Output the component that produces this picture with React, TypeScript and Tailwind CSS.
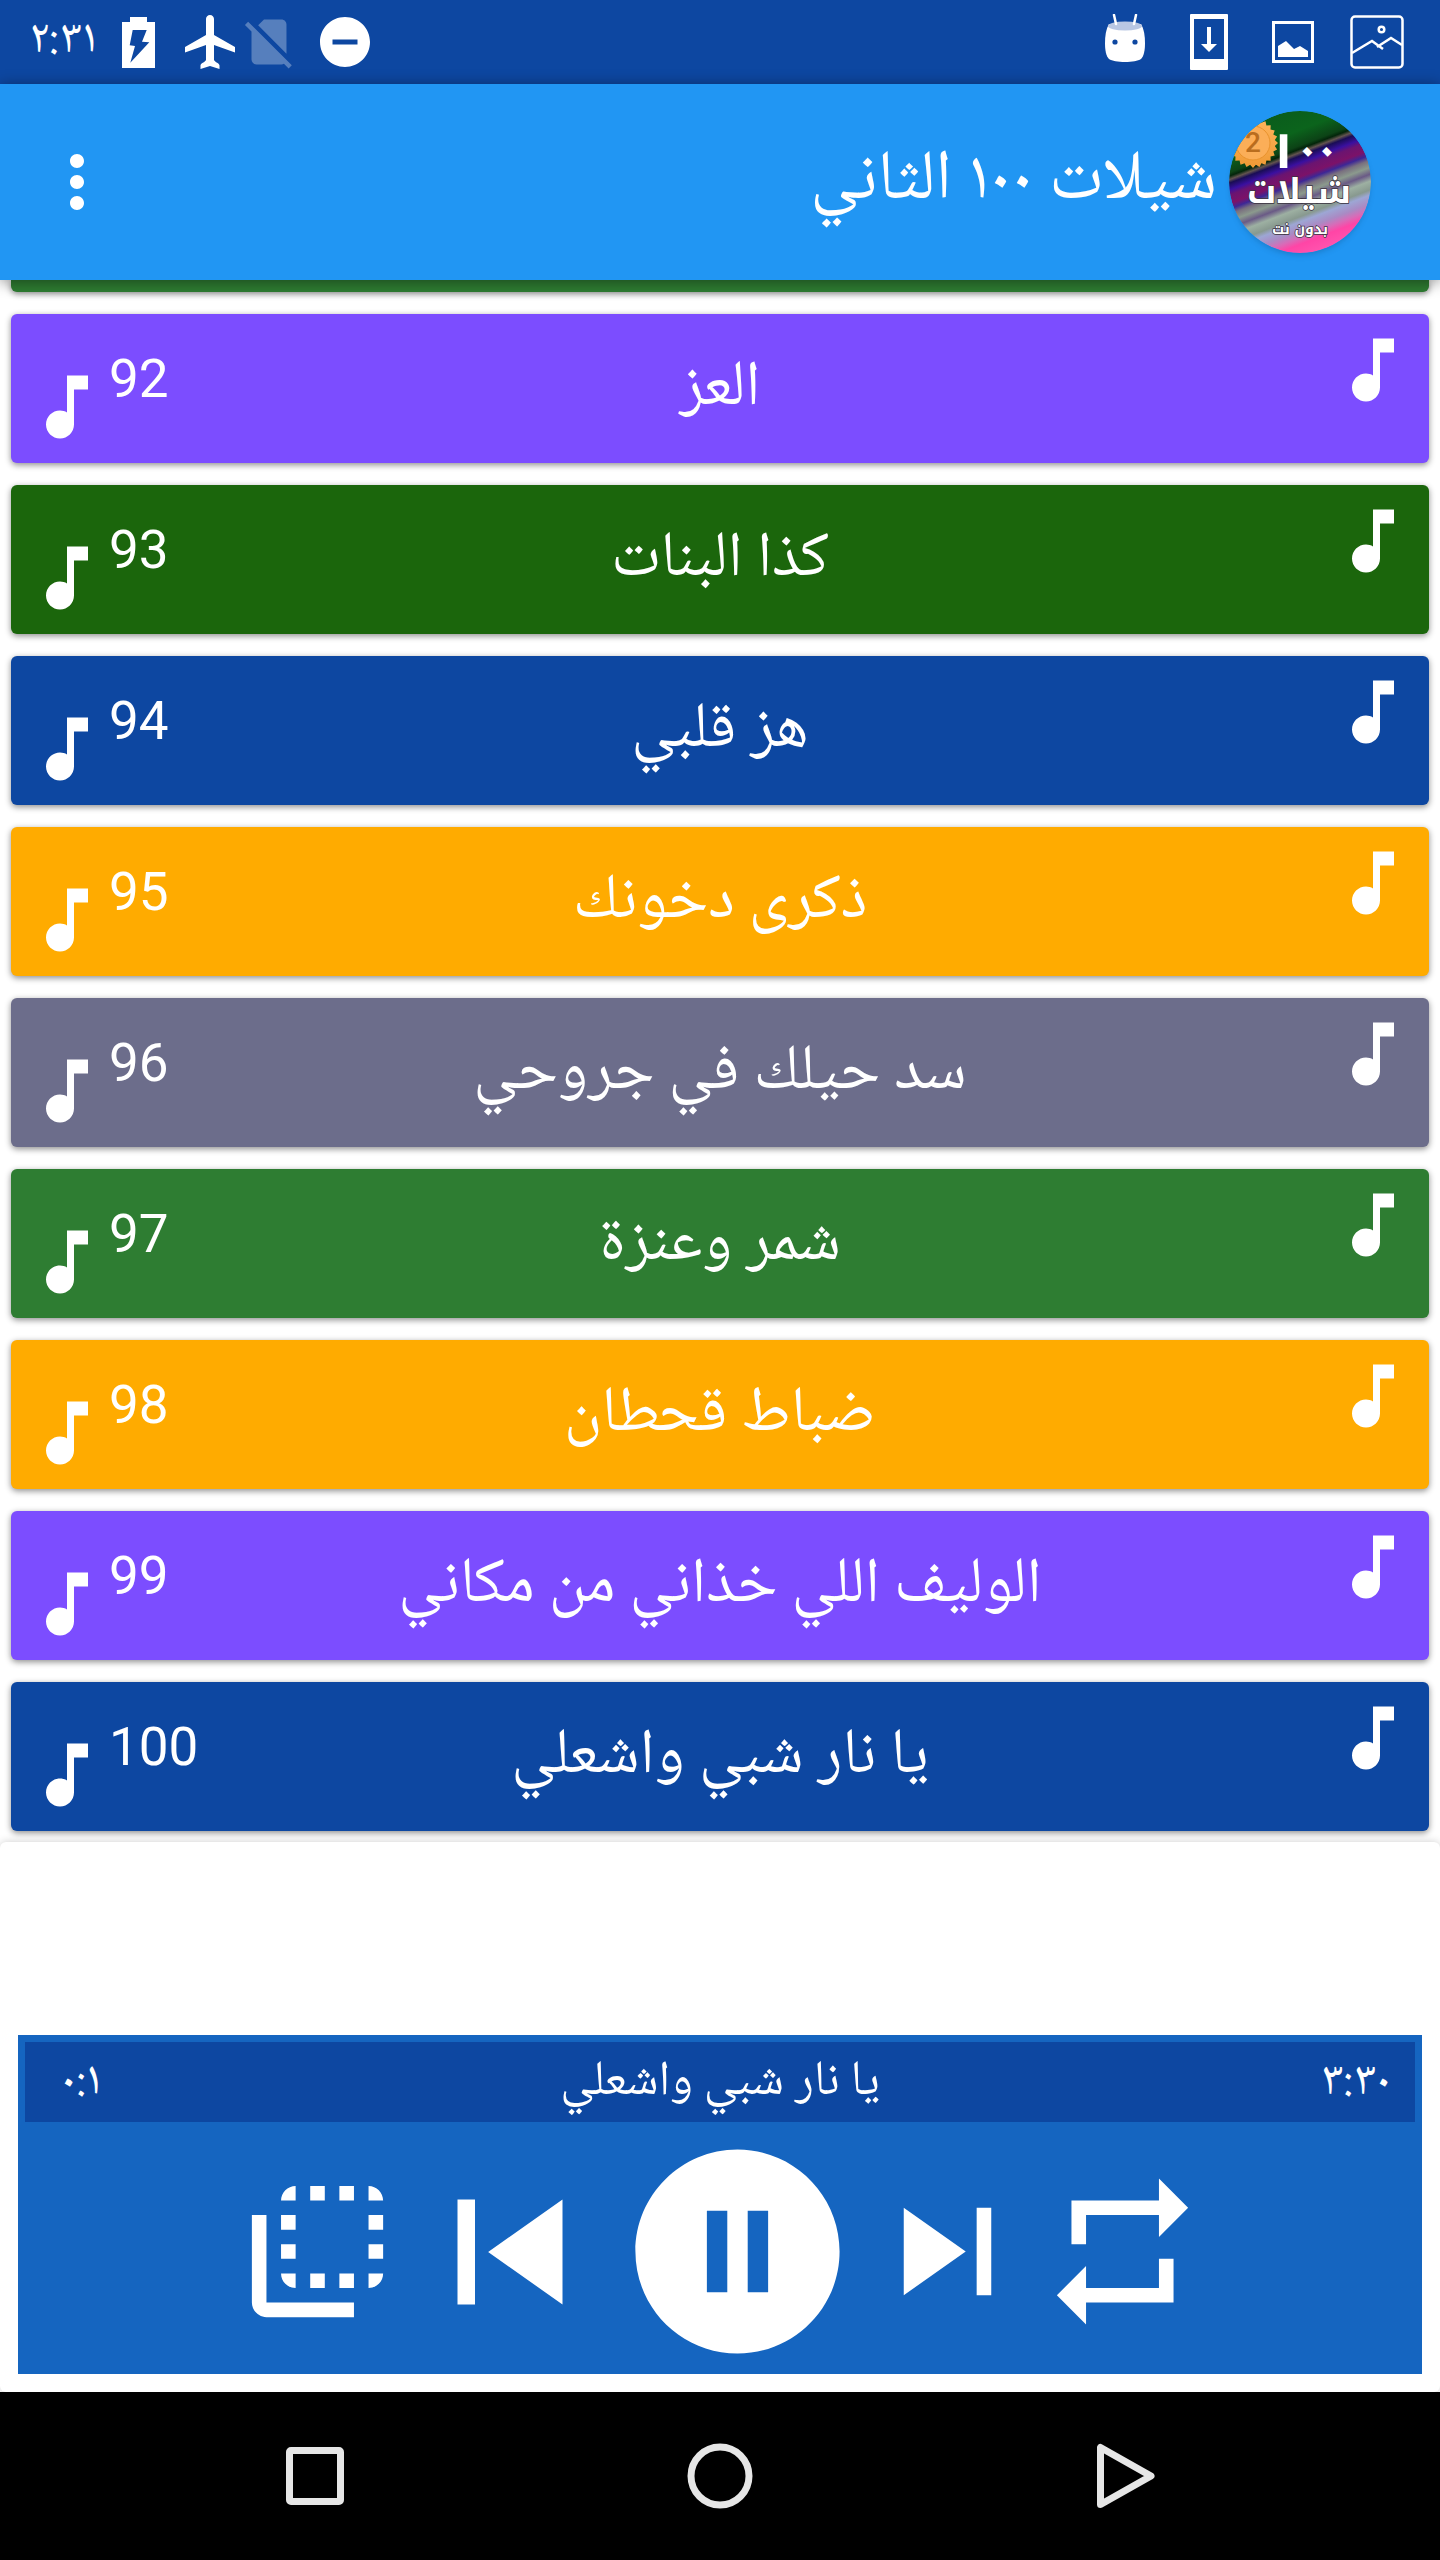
import React from "react";

type Track = { number: number; title: string; color: string };

const tracks: Track[] = [
  { number: 92, title: "العز", color: "bg-[#7c4dff]" },
  { number: 93, title: "كذا البنات", color: "bg-[#1b660c]" },
  { number: 94, title: "هز قلبي", color: "bg-[#0d47a1]" },
  { number: 95, title: "ذكرى دخونك", color: "bg-[#ffab00]" },
  { number: 96, title: "سد حيلك في جروحي", color: "bg-[#6c6d8b]" },
  { number: 97, title: "شمر وعنزة", color: "bg-[#2e7d32]" },
  { number: 98, title: "ضباط قحطان", color: "bg-[#ffab00]" },
  { number: 99, title: "الوليف اللي خذاني من مكاني", color: "bg-[#7c4dff]" },
  { number: 100, title: "يا نار شبي واشعلي", color: "bg-[#0d47a1]" },
];

function Icon({ path, className }: { path: string; className: string }) {
  return (
    <svg viewBox="0 0 24 24" fill="currentColor" aria-hidden="true" className={className}>
      <path d={path} />
    </svg>
  );
}

const NOTE = "M12 3v10.55c-.59-.34-1.27-.55-2-.55-2.21 0-4 1.79-4 4s1.79 4 4 4 4-1.79 4-4V7h4V3h-6z";
const MORE =
  "M12 8c1.1 0 2-.9 2-2s-.9-2-2-2-2 .9-2 2 .9 2 2 2zm0 2c-1.1 0-2 .9-2 2s.9 2 2 2 2-.9 2-2-.9-2-2-2zm0 6c-1.1 0-2 .9-2 2s.9 2 2 2 2-.9 2-2-.9-2-2-2z";
const NO_SIM =
  "M18.99 5c0-1.1-.89-2-1.99-2h-7L7.66 5.34 19 16.68 18.99 5zM3.65 3.88L2.38 5.15 5 7.77V19c0 1.1.9 2 2 2h10.01c.35 0 .67-.1.96-.26l1.88 1.88 1.27-1.27L3.65 3.88z";
const DND = "M12 2C6.48 2 2 6.48 2 12s4.48 10 10 10 10-4.48 10-10S17.52 2 12 2zm5 11H7v-2h10v2z";
const PREV = "M6 6h2v12H6zm3.5 6l8.5 6V6z";
const PAUSE = "M12 2C6.48 2 2 6.48 2 12s4.48 10 10 10 10-4.48 10-10S17.52 2 12 2zm-1 14H9V8h2v8zm4 0h-2V8h2v8z";
const NEXT = "M6 18l8.5-6L6 6v12zM16 6v12h2V6h-2z";
const REPEAT = "M7 7h10v3l4-4-4-4v3H5v6h2V7zm10 10H7v-3l-4 4 4 4v-3h12v-6h-2v4z";
const COPY_DASHED =
  "M3 7h2v12h12v2H5c-1.1 0-2-.9-2-2V7z" +
  "M7 7h2v2H7zM7 11h2v2H7zM19 7h2v2h-2zM19 11h2v2h-2z" +
  "M11 3h2v2h-2zM15 3h2v2h-2zM11 15h2v2h-2zM15 15h2v2h-2z" +
  "M9 3v2H7c0-1.1.9-2 2-2zM19 3c1.1 0 2 .9 2 2h-2V3zM7 15h2v2c-1.1 0-2-.9-2-2zM19 15h2c0 1.1-.9 2-2 2v-2z";

function StatusBar() {
  return (
    <header dir="ltr" className="flex h-[84px] shrink-0 items-center justify-between bg-[#0d47a1] pr-[21px] pl-[29px] text-white">
      <div className="flex items-center">
        <time className="w-[65px] pb-1 text-[48px] leading-[80px]">٢:٣١</time>
        <svg viewBox="0 0 33 51" className="ml-7 h-[51px] w-[33px]" aria-label="البطارية قيد الشحن">
          <path
            fill="currentColor"
            fillRule="evenodd"
            d="M8 0h17v5h8v46H0V5h8zM10.7 13 7.7 28.3 13 29 8.3 45.7 27.3 25.3 20 24.7 24.7 13z"
          />
        </svg>
        <svg viewBox="0 0 50 54" className="ml-[30px] h-[54px] w-[50px]" aria-label="وضع الطيران">
          <path
            fill="currentColor"
            d="M25 0c2.300 0 4 1.700 4 4v16L50 32v5.500L29 30v15c1 2.500 5.500 3 5.500 5.500V54L25 51l-9.500 3v-3.500c0-2.500 4.500-3 5.500-5.500V30L0 37.500V32l21-12V4c0-2.300 1.700-4 4-4z"
          />
        </svg>
        <Icon path={NO_SIM} className="ml-1 size-[60px] opacity-30" />
        <Icon path={DND} className="ml-4 size-[60px]" />
      </div>
      <div className="flex items-center">
        <div className="flex w-[84px] justify-center pb-2">
          <svg viewBox="0 0 40 48" className="h-[48px] w-[40px]" aria-hidden="true">
            <path d="M4 10h32c3 5 4 12 4 19s-1 13-4 16c-3 2-9 3-16 3S7 47 4 45c-3-3-4-9-4-16S1 15 4 10z" fill="white" />
            <ellipse cx="20" cy="12" rx="17" ry="4.500" fill="#b9c7e3" />
            <path d="M9 1l2 9M31 1l-2 9" stroke="white" strokeWidth="2.500" strokeLinecap="round" />
            <circle cx="10" cy="28" r="2.600" fill="#0d47a1" />
            <circle cx="30" cy="28" r="2.600" fill="#0d47a1" />
          </svg>
        </div>
        <div className="flex w-[84px] justify-center">
          <svg viewBox="0 0 38 56" className="h-[56px] w-[38px]" aria-hidden="true">
            <path
              fill="white"
              fillRule="evenodd"
              d="M1 0h36q1 0 1 1v54q0 1-1 1H1q-1 0-1-1V1q0-1 1-1zM4 5v40h30V5z"
            />
            <path fill="white" d="M17 13h4v17h6l-8 8-8-8h6z" />
          </svg>
        </div>
        <div className="flex w-[84px] justify-center">
          <svg viewBox="0 0 42 42" className="size-[42px]" aria-hidden="true">
            <rect x="1.500" y="1.500" width="39" height="39" fill="none" stroke="white" strokeWidth="3" />
            <path fill="white" d="M6 25l8-5 8 8 6-3 8 5v6H6z" />
          </svg>
        </div>
        <div className="flex w-[84px] justify-center">
          <svg viewBox="0 0 54 54" className="size-[54px]" fill="none" stroke="white" strokeWidth="2.500" aria-hidden="true">
            <rect x="1.500" y="1.500" width="51" height="51" rx="3.500" />
            <circle cx="31.500" cy="14.500" r="2.800" />
            <path d="M2 38l20-12 11 8M27 32l14-9 11 7" />
          </svg>
        </div>
      </div>
    </header>
  );
}

const badgePoints = Array.from({ length: 48 }, (_, i) => {
  const r = i % 2 === 0 ? 25 : 22;
  const a = (i / 48) * Math.PI * 2;
  return `${(24 + r * Math.cos(a)).toFixed(1)},${(32 + r * Math.sin(a)).toFixed(1)}`;
}).join(" ");

function Logo() {
  return (
    <svg viewBox="0 0 142 142" className="size-[142px] rounded-full shadow-md" role="img" aria-label="١٠٠ شيلات بدون نت">
      <defs>
        <clipPath id="disc">
          <circle cx="71" cy="71" r="71" />
        </clipPath>
        <linearGradient id="stripes" x1="0" y1="0" x2="0" y2="1">
          <stop offset="0" stopColor="#0a5a1c" />
          <stop offset="0.200" stopColor="#0b641c" />
          <stop offset="0.290" stopColor="#0c4316" />
          <stop offset="0.310" stopColor="#03250a" />
          <stop offset="0.330" stopColor="#63544f" />
          <stop offset="0.350" stopColor="#1a0d55" />
          <stop offset="0.390" stopColor="#3a10a0" />
          <stop offset="0.420" stopColor="#6b1470" />
          <stop offset="0.470" stopColor="#7c1268" />
          <stop offset="0.500" stopColor="#3d2796" />
          <stop offset="0.530" stopColor="#79707f" />
          <stop offset="0.570" stopColor="#8b9a8d" />
          <stop offset="0.610" stopColor="#6a5a86" />
          <stop offset="0.650" stopColor="#9db0a2" />
          <stop offset="0.700" stopColor="#88998f" />
          <stop offset="0.730" stopColor="#9da6d4" />
          <stop offset="0.780" stopColor="#a98bc4" />
          <stop offset="0.820" stopColor="#d76cb8" />
          <stop offset="0.860" stopColor="#ff45a6" />
          <stop offset="1" stopColor="#ff5fb4" />
        </linearGradient>
        <linearGradient id="gold" x1="0" y1="0" x2="0" y2="1">
          <stop offset="0" stopColor="#ffb45c" />
          <stop offset="1" stopColor="#ef9a35" />
        </linearGradient>
      </defs>
      <g clipPath="url(#disc)">
        <rect x="-30" y="-10" width="202" height="162" fill="url(#stripes)" transform="rotate(-21 71 71)" />
        <polygon points={badgePoints} fill="url(#gold)" />
        <circle cx="24" cy="32" r="17" fill="#fbae58" stroke="#e8932f" strokeWidth="1" />
        <text x="24" y="41" textAnchor="middle" fontSize="28" fontWeight="500" fill="#b96d1e" className="font-['Roboto',sans-serif]">
          2
        </text>
        <g
          fill="white"
          stroke="#3a3340"
          strokeWidth="1.500"
          paintOrder="stroke"
          textAnchor="middle"
          fontWeight="700"
          className="font-['Noto_Kufi_Arabic','Noto_Sans_Arabic_UI','Noto_Sans_Arabic','DejaVu_Sans',sans-serif]"
        >
          <text x="74" y="57" fontSize="50" stroke="none" direction="ltr">
            ١<tspan fontSize="34" dy="-4">٠٠</tspan>
          </text>
          <text x="70" y="92" fontSize="34">
            شيلات
          </text>
          <text x="71" y="123" fontSize="14">
            بدون نت
          </text>
        </g>
      </g>
    </svg>
  );
}

function AppBar() {
  return (
    <div className="relative z-10 flex h-[196px] shrink-0 items-center bg-[#2196f3] pr-[69px] pl-[35px] text-white shadow-[0_2px_14px_rgba(0,0,0,0.45)]">
      <Logo />
      <h1 className="mr-3 pb-1 text-[70px] leading-[80px] whitespace-nowrap">شيلات ١٠٠ الثاني</h1>
      <button type="button" aria-label="المزيد من الخيارات" className="mr-auto">
        <Icon path={MORE} className="size-[84px]" />
      </button>
    </div>
  );
}

function TrackCard({ track }: { track: Track }) {
  return (
    <li>
      <button
        type="button"
        className={`grid h-[149px] w-full grid-cols-[1fr_auto_1fr] rounded-md p-[14px] text-white shadow-[0_2px_6px_rgba(0,0,0,0.45)] ${track.color}`}
      >
        <Icon path={NOTE} className="size-[84px]" />
        <span className="self-center text-[64px] leading-[72px] whitespace-nowrap">{track.title}</span>
        <span dir="ltr" className="flex h-full items-end">
          <Icon path={NOTE} className="size-[84px]" />
          <span className="self-start pt-[19px] text-[53px] leading-[64px] font-['Roboto',sans-serif]">{track.number}</span>
        </span>
      </button>
    </li>
  );
}

function Player() {
  return (
    <section aria-label="المشغل" className="bg-[#1565c0] p-[7px] pb-0 text-white">
      <div dir="ltr" className="grid h-[80px] grid-cols-[1fr_auto_1fr] items-center bg-[#0d47a1] pr-6 pl-9">
        <time className="text-[48px] leading-[64px]">٠:١</time>
        <span dir="rtl" className="pr-3 text-[49px] leading-[64px] whitespace-nowrap">
          يا نار شبي واشعلي
        </span>
        <time className="justify-self-end text-[48px] leading-[64px]">٣:٣٠</time>
      </div>
      <div dir="ltr" className="mt-[7px] flex items-center justify-center">
        <button type="button" aria-label="قائمة التشغيل">
          <Icon path={COPY_DASHED} className="size-[175px]" />
        </button>
        <button type="button" aria-label="السابق">
          <Icon path={PREV} className="size-[210px]" />
        </button>
        <button type="button" aria-label="إيقاف مؤقت">
          <Icon path={PAUSE} className="size-[245px]" />
        </button>
        <button type="button" aria-label="التالي">
          <Icon path={NEXT} className="size-[175px]" />
        </button>
        <button type="button" aria-label="تكرار">
          <Icon path={REPEAT} className="size-[175px]" />
        </button>
      </div>
    </section>
  );
}

function NavigationBar() {
  return (
    <nav dir="ltr" className="grid h-[168px] shrink-0 grid-cols-3 place-items-center bg-black px-28 text-[#e6e6e6]">
      <button type="button" aria-label="التطبيقات الأخيرة">
        <svg viewBox="0 0 66 66" className="size-[66px]" fill="none" stroke="currentColor" strokeWidth="7">
          <rect x="7.500" y="7.500" width="51" height="51" rx="1.500" />
        </svg>
      </button>
      <button type="button" aria-label="الشاشة الرئيسية">
        <svg viewBox="0 0 66 66" className="size-[66px]" fill="none" stroke="currentColor" strokeWidth="7">
          <circle cx="33" cy="33" r="29" />
        </svg>
      </button>
      <button type="button" aria-label="رجوع">
        <svg viewBox="0 0 66 66" className="size-[66px]" fill="none" stroke="currentColor" strokeWidth="7" strokeLinejoin="round">
          <path d="M8.500 4.500v57L59 33z" />
        </svg>
      </button>
    </nav>
  );
}

export default function App() {
  return (
    <div
      dir="rtl"
      lang="ar"
      className="flex min-h-screen flex-col bg-white font-['Noto_Naskh_Arabic_UI','Noto_Naskh_Arabic','DejaVu_Sans',sans-serif]"
    >
      <StatusBar />
      <AppBar />
      <main className="flex flex-1 flex-col">
        <div className="px-[11px] pb-[11px]">
          <div className="h-3 rounded-b-md bg-[#2e7d32] shadow-[0_2px_6px_rgba(0,0,0,0.45)]" />
          <ul className="mt-[22px] flex flex-col gap-[22px]">
            {tracks.map((track) => (
              <TrackCard key={track.number} track={track} />
            ))}
          </ul>
        </div>
        <div className="relative flex flex-1 flex-col justify-end rounded-md bg-white p-[18px] shadow-[0_0_8px_rgba(0,0,0,0.2)]">
          <Player />
        </div>
      </main>
      <NavigationBar />
    </div>
  );
}
